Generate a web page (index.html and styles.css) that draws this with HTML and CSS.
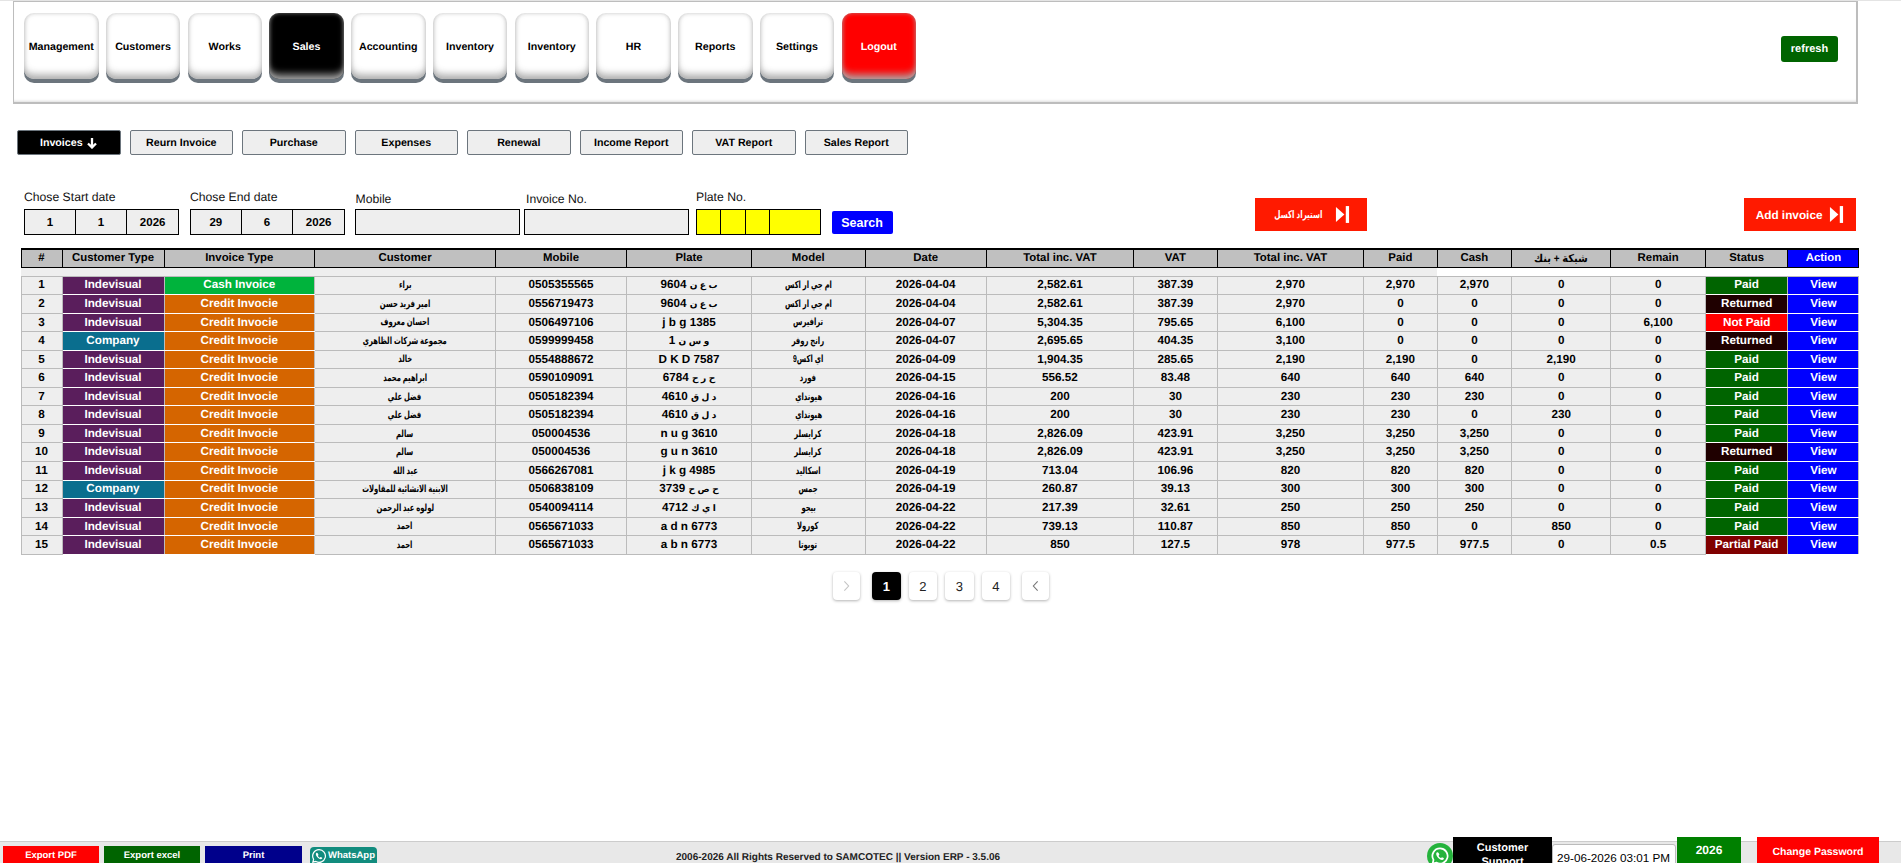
FILE: index.html
```html
<!DOCTYPE html>
<html lang="en">

<head>
    <meta charset="UTF-8">
    <meta name="viewport" content="width=device-width, initial-scale=1.0">
    <title>Invoices</title>
    <link rel="stylesheet" href="styles.css">
</head>

<body>
    <main class="page">

        <header class="topbar">
            <nav class="mainnav">
                <a class="navbtn">Management</a>
                <a class="navbtn">Customers</a>
                <a class="navbtn">Works</a>
                <a class="navbtn navbtn-active">Sales</a>
                <a class="navbtn">Accounting</a>
                <a class="navbtn">Inventory</a>
                <a class="navbtn">Inventory</a>
                <a class="navbtn">HR</a>
                <a class="navbtn">Reports</a>
                <a class="navbtn">Settings</a>
                <a class="navbtn navbtn-logout">Logout</a>
            </nav>
            <a class="refresh">refresh</a>
        </header>

        <div class="subnav">
            <a class="subbtn subbtn-active">Invoices
                <svg class="arrow" viewBox="0 0 12 12" width="12" height="12"><path d="M6 1v9M2 6.500 6 10.500l4-4" fill="none" stroke="#fff" stroke-width="2.300"/></svg>
            </a>
            <a class="subbtn">Reurn Invoice</a>
            <a class="subbtn">Purchase</a>
            <a class="subbtn">Expenses</a>
            <a class="subbtn">Renewal</a>
            <a class="subbtn">Income Report</a>
            <a class="subbtn">VAT Report</a>
            <a class="subbtn">Sales Report</a>
        </div>

        <form class="filters">
            <div class="field field-date">
                <label>Chose Start date</label>
                <div class="cells">
                    <input value="1"><input value="1"><input value="2026">
                </div>
            </div>
            <div class="field field-date field-end">
                <label>Chose End date</label>
                <div class="cells">
                    <input value="29"><input value="6"><input value="2026">
                </div>
            </div>
            <div class="field field-text field-mobile">
                <label>Mobile</label>
                <input>
            </div>
            <div class="field field-text field-invoice">
                <label>Invoice No.</label>
                <input>
            </div>
            <div class="field field-plate">
                <label>Plate No.</label>
                <div class="cells plate-cells">
                    <input><input><input><input>
                </div>
            </div>
            <button type="button" class="search">Search</button>
            <a class="redbtn redbtn-import"><span class="ar ar-import">استيراد اكسل</span>
                <svg class="skip" viewBox="0 0 16 18" width="15" height="17"><path d="M1 1 10 9 1 17z" fill="#fff"/><rect x="11.500" y="0" width="3.500" height="18" fill="#fff"/></svg>
            </a>
            <a class="redbtn redbtn-add">Add invoice
                <svg class="skip" viewBox="0 0 16 18" width="15" height="17"><path d="M1 1 10 9 1 17z" fill="#fff"/><rect x="11.500" y="0" width="3.500" height="18" fill="#fff"/></svg>
            </a>
        </form>

        <table class="invoices">
            <colgroup>
                <col class="c1"><col class="c2"><col class="c3"><col class="c4"><col class="c5"><col class="c6">
                <col class="c7"><col class="c8"><col class="c9"><col class="c10"><col class="c11"><col class="c12">
                <col class="c13"><col class="c14"><col class="c15"><col class="c16"><col class="c17">
            </colgroup>
            <thead>
                <tr>
                    <th>#</th><th>Customer Type</th><th>Invoice Type</th><th>Customer</th><th>Mobile</th><th>Plate</th><th>Model</th><th>Date</th>
                    <th>Total inc. VAT</th><th>VAT</th><th>Total inc. VAT</th><th>Paid</th><th>Cash</th><th><span class="ar ar-head">شبكة + بنك</span></th><th>Remain</th><th>Status</th><th class="th-action">Action</th>
                </tr>
                <tr class="gap">
                    <td colspan="12"></td><td colspan="5" class="gap-white"></td>
                </tr>
            </thead>
            <tbody>
                <tr><td>1</td><td class="tag person">Indevisual</td><td class="tag cash">Cash Invoice</td><td><span class="ar">براء</span></td><td>0505355565</td><td><span class="pl">ب ع ن</span> 9604</td><td><span class="ar">ام جي ار اكس</span></td><td>2026-04-04</td><td>2,582.61</td><td>387.39</td><td>2,970</td><td>2,970</td><td>2,970</td><td>0</td><td>0</td><td class="tag paid">Paid</td><td class="tag view">View</td></tr>
                <tr><td>2</td><td class="tag person">Indevisual</td><td class="tag credit">Credit Invocie</td><td><span class="ar">امير فريد حسن</span></td><td>0556719473</td><td><span class="pl">ب ع ن</span> 9604</td><td><span class="ar">ام جي ار اكس</span></td><td>2026-04-04</td><td>2,582.61</td><td>387.39</td><td>2,970</td><td>0</td><td>0</td><td>0</td><td>0</td><td class="tag returned">Returned</td><td class="tag view">View</td></tr>
                <tr><td>3</td><td class="tag person">Indevisual</td><td class="tag credit">Credit Invocie</td><td><span class="ar">احسان معروف</span></td><td>0506497106</td><td>j b g 1385</td><td><span class="ar">ترافيرس</span></td><td>2026-04-07</td><td>5,304.35</td><td>795.65</td><td>6,100</td><td>0</td><td>0</td><td>0</td><td>6,100</td><td class="tag notpaid">Not Paid</td><td class="tag view">View</td></tr>
                <tr><td>4</td><td class="tag company">Company</td><td class="tag credit">Credit Invocie</td><td><span class="ar">مجموعة شركات الظاهري</span></td><td>0599999458</td><td><span class="pl">و س ن</span> 1</td><td><span class="ar">رانج روفر</span></td><td>2026-04-07</td><td>2,695.65</td><td>404.35</td><td>3,100</td><td>0</td><td>0</td><td>0</td><td>0</td><td class="tag returned">Returned</td><td class="tag view">View</td></tr>
                <tr><td>5</td><td class="tag person">Indevisual</td><td class="tag credit">Credit Invocie</td><td><span class="ar">خالد</span></td><td>0554888672</td><td>D K D 7587</td><td><span class="ar">اي اكس9</span></td><td>2026-04-09</td><td>1,904.35</td><td>285.65</td><td>2,190</td><td>2,190</td><td>0</td><td>2,190</td><td>0</td><td class="tag paid">Paid</td><td class="tag view">View</td></tr>
                <tr><td>6</td><td class="tag person">Indevisual</td><td class="tag credit">Credit Invocie</td><td><span class="ar">ابراهيم محمد</span></td><td>0590109091</td><td><span class="pl">ح ر ح</span> 6784</td><td><span class="ar">فورد</span></td><td>2026-04-15</td><td>556.52</td><td>83.48</td><td>640</td><td>640</td><td>640</td><td>0</td><td>0</td><td class="tag paid">Paid</td><td class="tag view">View</td></tr>
                <tr><td>7</td><td class="tag person">Indevisual</td><td class="tag credit">Credit Invocie</td><td><span class="ar">فضل علي</span></td><td>0505182394</td><td><span class="pl">د ل ق</span> 4610</td><td><span class="ar">هيونداي</span></td><td>2026-04-16</td><td>200</td><td>30</td><td>230</td><td>230</td><td>230</td><td>0</td><td>0</td><td class="tag paid">Paid</td><td class="tag view">View</td></tr>
                <tr><td>8</td><td class="tag person">Indevisual</td><td class="tag credit">Credit Invocie</td><td><span class="ar">فضل علي</span></td><td>0505182394</td><td><span class="pl">د ل ق</span> 4610</td><td><span class="ar">هيونداي</span></td><td>2026-04-16</td><td>200</td><td>30</td><td>230</td><td>230</td><td>0</td><td>230</td><td>0</td><td class="tag paid">Paid</td><td class="tag view">View</td></tr>
                <tr><td>9</td><td class="tag person">Indevisual</td><td class="tag credit">Credit Invocie</td><td><span class="ar">سالم</span></td><td>050004536</td><td>n u g 3610</td><td><span class="ar">كرايسلر</span></td><td>2026-04-18</td><td>2,826.09</td><td>423.91</td><td>3,250</td><td>3,250</td><td>3,250</td><td>0</td><td>0</td><td class="tag paid">Paid</td><td class="tag view">View</td></tr>
                <tr><td>10</td><td class="tag person">Indevisual</td><td class="tag credit">Credit Invocie</td><td><span class="ar">سالم</span></td><td>050004536</td><td>g u n 3610</td><td><span class="ar">كرايسلر</span></td><td>2026-04-18</td><td>2,826.09</td><td>423.91</td><td>3,250</td><td>3,250</td><td>3,250</td><td>0</td><td>0</td><td class="tag returned">Returned</td><td class="tag view">View</td></tr>
                <tr><td>11</td><td class="tag person">Indevisual</td><td class="tag credit">Credit Invocie</td><td><span class="ar">عبد الله</span></td><td>0566267081</td><td>j k g 4985</td><td><span class="ar">اسكاليد</span></td><td>2026-04-19</td><td>713.04</td><td>106.96</td><td>820</td><td>820</td><td>820</td><td>0</td><td>0</td><td class="tag paid">Paid</td><td class="tag view">View</td></tr>
                <tr><td>12</td><td class="tag company">Company</td><td class="tag credit">Credit Invocie</td><td><span class="ar">الابنية الانشائية للمقاولات</span></td><td>0506838109</td><td><span class="pl">ح ص ح</span> 3739</td><td><span class="ar">جمس</span></td><td>2026-04-19</td><td>260.87</td><td>39.13</td><td>300</td><td>300</td><td>300</td><td>0</td><td>0</td><td class="tag paid">Paid</td><td class="tag view">View</td></tr>
                <tr><td>13</td><td class="tag person">Indevisual</td><td class="tag credit">Credit Invocie</td><td><span class="ar">لولوه عبد الرحمن</span></td><td>0540094114</td><td><span class="pl">ا ي ك</span> 4712</td><td><span class="ar">بيجو</span></td><td>2026-04-22</td><td>217.39</td><td>32.61</td><td>250</td><td>250</td><td>250</td><td>0</td><td>0</td><td class="tag paid">Paid</td><td class="tag view">View</td></tr>
                <tr><td>14</td><td class="tag person">Indevisual</td><td class="tag credit">Credit Invocie</td><td><span class="ar">احمد</span></td><td>0565671033</td><td>a d n 6773</td><td><span class="ar">كورولا</span></td><td>2026-04-22</td><td>739.13</td><td>110.87</td><td>850</td><td>850</td><td>0</td><td>850</td><td>0</td><td class="tag paid">Paid</td><td class="tag view">View</td></tr>
                <tr><td>15</td><td class="tag person">Indevisual</td><td class="tag credit">Credit Invocie</td><td><span class="ar">احمد</span></td><td>0565671033</td><td>a b n 6773</td><td><span class="ar">تويوتا</span></td><td>2026-04-22</td><td>850</td><td>127.5</td><td>978</td><td>977.5</td><td>977.5</td><td>0</td><td>0.5</td><td class="tag partial">Partial Paid</td><td class="tag view">View</td></tr>
            </tbody>
        </table>

        <div class="pager">
            <a class="pagebtn pagebtn-arrow pagebtn-off">
                <svg viewBox="0 0 8 14" width="7" height="12"><path d="M1.500 1.500 6.500 7l-5 5.500" fill="none" stroke="#c4c4c4" stroke-width="1.300"/></svg>
            </a>
            <a class="pagebtn pagebtn-active">1</a>
            <a class="pagebtn">2</a>
            <a class="pagebtn">3</a>
            <a class="pagebtn">4</a>
            <a class="pagebtn pagebtn-arrow">
                <svg viewBox="0 0 8 14" width="7" height="12"><path d="M6.500 1.500 1.500 7l5 5.500" fill="none" stroke="#777" stroke-width="1.300"/></svg>
            </a>
        </div>

    </main>

    <footer class="footer">
        <a class="footbtn foot-pdf">Export PDF</a>
        <a class="footbtn foot-excel">Export excel</a>
        <a class="footbtn foot-print">Print</a>
        <a class="foot-whatsapp">
            <svg viewBox="0 0 24 24" width="16" height="16"><path d="M12 2.500a9.500 9.500 0 0 0-8.100 14.400L2.800 21.300l4.500-1.100A9.500 9.500 0 1 0 12 2.500z" fill="none" stroke="#fff" stroke-width="1.800"/><path d="M8.600 7.300c-.5 0-1.300.8-1.300 2.200 0 2.700 3.800 7 7.300 7.300 1.400.1 2.300-.9 2.300-1.700 0-.5-2-1.600-2.400-1.500-.4.100-.8 1-1.200 1-.8 0-3-2.200-3-3 0-.4.800-.8.900-1.200.1-.4-1.100-3.100-2.600-3.100z" fill="#fff"/></svg>
            WhatsApp
        </a>
        <p class="copyright">2006-2026 All Rights Reserved to SAMCOTEC || Version ERP - 3.5.06</p>
        <div class="foot-right">
            <a class="wa-circle">
                <svg viewBox="0 0 24 24" width="26" height="26"><circle cx="12" cy="12" r="12" fill="#25b33c"/><path d="M12 5a7 7 0 0 0-6 10.600L5.200 19l3.400-.9A7 7 0 1 0 12 5z" fill="none" stroke="#fff" stroke-width="1.600"/><path d="M9.500 8.600c-.4 0-1 .6-1 1.600 0 2 2.800 5.200 5.400 5.400 1 .1 1.700-.7 1.700-1.300 0-.4-1.500-1.200-1.800-1.100-.3.100-.6.700-.9.700-.6 0-2.200-1.600-2.200-2.200 0-.3.600-.6.700-.9.100-.3-.8-2.200-1.900-2.200z" fill="#fff"/></svg>
            </a>
            <a class="support">Customer<br>Support</a>
            <input class="clock" value="29-06-2026 03:01 PM">
            <span class="year">2026</span>
            <a class="changepass">Change Password</a>
        </div>
    </footer>
</body>

</html>
```

FILE: styles.css
```css
* {
    box-sizing: border-box;
}

html,
body {
    height: 100%;
}

body {
    margin: 0;
    display: flex;
    flex-direction: column;
    overflow: hidden;
    border-top: 1px solid #e4e4e4;
    background: #fff;
    font-family: "Liberation Sans", "DejaVu Sans", sans-serif;
    color: #000;
    text-rendering: geometricPrecision;
}

.page {
    flex: 1;
    min-height: 0;
}

/* top menu */

.topbar {
    width: 1845px;
    height: 103px;
    margin-left: 13px;
    padding: 11px 18px 0 10px;
    display: flex;
    justify-content: space-between;
    align-items: flex-start;
    border: 1px solid #bdbdbd;
    border-right-width: 2px;
    border-bottom-width: 2px;
    box-shadow: inset 0 -3px 3px -2px #ddd;
}

.mainnav {
    display: flex;
    gap: 7.250px;
}

.navbtn {
    width: 74.500px;
    height: 66px;
    padding-top: 2px;
    display: flex;
    align-items: center;
    justify-content: center;
    border-radius: 10px;
    background: #fff;
    font-size: 10.670px;
    font-weight: 700;
    box-shadow: inset 0 -7px 7px -2px rgba(170, 170, 170, .85), inset 0 0 4px rgba(170, 170, 170, .7), 0 4px 0 #6c757d;
}

.navbtn-active {
    background: #000;
    color: #fff;
}

.navbtn-logout {
    background: #f00;
    color: #fff;
}

.refresh {
    width: 57px;
    height: 26px;
    margin-top: 23px;
    display: flex;
    align-items: center;
    justify-content: center;
    border-radius: 3px;
    background: #006400;
    color: #fff;
    font-size: 11px;
    font-weight: 700;
}

/* sub menu */

.subnav {
    margin: 26px 0 0 17px;
    display: flex;
    gap: 9px;
}

.subbtn {
    width: 103.500px;
    height: 25px;
    padding-top: 1px;
    display: flex;
    align-items: center;
    justify-content: center;
    gap: 3px;
    border: 1px solid #6c757d;
    border-radius: 2px;
    background: #eee;
    font-size: 10.670px;
    font-weight: 700;
}

.subbtn-active {
    background: #000;
    color: #fff;
}

/* search row */

.filters {
    margin: 0 0 0 24px;
    height: 80px;
    display: flex;
    align-items: flex-end;
}

.field label {
    display: block;
    margin-bottom: 5px;
    font-size: 12.200px;
    color: #111;
}

.field input {
    height: 26px;
    border: 1px solid #000;
    background: #eee;
    border-radius: 0;
    padding: 0;
    outline: 0;
    text-align: center;
    font-family: inherit;
    font-size: 11.500px;
    font-weight: 700;
}

.cells {
    display: flex;
}

.field-date {
    width: 155px;
}

.field-date input {
    width: 33.333%;
    border-left-width: 0;
}

.field-date input:first-child {
    border-left-width: 1px;
}

.field-end {
    margin-left: 11px;
}

.field-text {
    width: 165px;
}

.field-text label {
    margin-bottom: 3px;
}

.field-text input {
    width: 100%;
    border-width: 1.500px;
}

.field-mobile {
    margin-left: 9.500px;
}

.field-mobile label {
    margin-left: 1px;
}

.field-invoice {
    margin-left: 4.500px;
}

.field-invoice label {
    margin-left: 2px;
}

.field-plate {
    width: 124.600px;
    margin-left: 7px;
}

.plate-cells input {
    background: #ff0;
    width: 24.500px;
    border-left-width: 0;
}

.plate-cells input:first-child {
    width: 25px;
    border-left-width: 1px;
}

.plate-cells input:last-child {
    flex: 1;
}

.search {
    width: 61px;
    height: 23px;
    margin: 0 0 1px 11px;
    border: 0;
    border-radius: 2px;
    background: #00f;
    color: #fff;
    font-family: inherit;
    font-size: 12.500px;
    font-weight: 700;
}

.redbtn {
    width: 112px;
    height: 33px;
    margin-bottom: 4px;
    display: flex;
    align-items: center;
    justify-content: center;
    gap: 6px;
    background: #ff1a00;
    color: #fff;
    font-size: 11.800px;
    font-weight: 700;
}

.redbtn-import {
    margin-left: 362px;
}

.redbtn-add {
    margin-left: 377px;
}

/* table */

.invoices {
    width: 1838px;
    margin: 13px 0 0 20.500px;
    border-collapse: collapse;
    table-layout: fixed;
    font-size: 11.700px;
    font-weight: 700;
    text-align: center;
}

.c1 { width: 41px; }
.c2 { width: 102px; }
.c3 { width: 150.500px; }
.c4 { width: 181px; }
.c5 { width: 131px; }
.c6 { width: 125px; }
.c7 { width: 113.500px; }
.c8 { width: 121.400px; }
.c9 { width: 147px; }
.c10 { width: 84px; }
.c11 { width: 146px; }
.c12 { width: 74px; }
.c13 { width: 74px; }
.c14 { width: 99.600px; }
.c15 { width: 94.400px; }
.c16 { width: 82.600px; }
.c17 { width: 71px; }

.invoices th {
    height: 18px;
    padding: 0;
    background: #c0c0c0;
    border: 1px solid #000;
    border-top-width: 2px;
    font-size: 11.400px;
    font-weight: 700;
}

.invoices .th-action {
    background: #00f;
    color: #fff;
}

.gap td {
    height: 9px;
    padding: 0;
    background: #eee;
    border: 0;
    border-bottom: 1px solid #bbb;
}

.gap .gap-white {
    background: #fff;
}

.invoices tbody td {
    height: 18.550px;
    padding: 0;
    background: #eee;
    border: 1px solid #bbb;
    white-space: nowrap;
    line-height: 1;
}

/* the only installed arabic face is wide, so squeeze it to the width of the original */
.ar {
    display: inline-block;
    font-size: 10px;
    transform: scaleX(.68);
}

.ar-import {
    margin: 0 -5px 0 -8px;
    font-size: 10.500px;
}

.ar-head {
    font-size: 11px;
    transform: scaleX(.9);
}

.pl {
    font-size: 9px;
}

.invoices tbody .tag {
    color: #fff;
    border-bottom-color: #fff;
    border-left-color: #bbb;
}

.invoices tbody .person { background: #5a1e5c; }
.invoices tbody .company { background: #0a6e8e; }
.invoices tbody .cash { background: #00b33c; }
.invoices tbody .credit { background: #d56500; }
.invoices tbody .paid { background: #006400; }
.invoices tbody .returned { background: #1f0000; }
.invoices tbody .notpaid { background: #f00; }
.invoices tbody .partial { background: #800000; }
.invoices tbody .view { background: #00f; }

/* pager */

.pager {
    margin: 17.500px 0 0 833px;
    display: flex;
    gap: 8px;
}

.pagebtn {
    width: 28.500px;
    height: 28px;
    display: flex;
    align-items: center;
    justify-content: center;
    border-radius: 4px;
    background: #fff;
    color: #222;
    font-size: 13px;
    box-shadow: 0 1px 3px rgba(0, 0, 0, .3);
}

.pagebtn-arrow {
    width: 27px;
}

.pagebtn-off {
    margin-right: 4px;
}

.pagebtn-arrow:last-child {
    margin-left: 4px;
}

.pagebtn-active {
    background: #000;
    color: #fff;
    font-weight: 700;
}

/* footer */

.footer {
    height: 22px;
    flex: none;
    padding-left: 3px;
    display: flex;
    align-items: flex-start;
    border-top: 1px solid #ccc;
    background: #e8e8e8;
}

.footbtn {
    width: 96px;
    height: 17px;
    margin: 4px 5px 0 0;
    display: flex;
    align-items: flex-start;
    justify-content: center;
    padding-top: 4px;
    color: #fff;
    font-size: 9.500px;
    font-weight: 700;
}

.foot-pdf { background: #f00; }
.foot-excel { background: #006400; }
.foot-print { background: #00008b; width: 97px; margin-right: 8px; }

.foot-whatsapp {
    width: 67px;
    height: 17px;
    margin-top: 5px;
    display: flex;
    align-items: center;
    gap: 1px;
    padding-left: 1px;
    border-radius: 4px 4px 0 0;
    background: #128c7e;
    color: #fff;
    font-size: 9.500px;
    font-weight: 700;
}

.copyright {
    margin: 10px 0 0 299px;
    font-size: 10px;
    font-weight: 700;
    color: #222;
}

.foot-right {
    margin-left: auto;
    padding-right: 22px;
    display: flex;
    align-items: flex-start;
    height: 22px;
}

.wa-circle {
    margin-top: 1px;
    height: 26px;
}

.support {
    width: 99px;
    height: 30px;
    margin-top: -5px;
    padding-top: 4px;
    background: #000;
    color: #fff;
    text-align: center;
    font-size: 11px;
    line-height: 14px;
    font-weight: 700;
}

.clock {
    width: 124px;
    height: 24px;
    margin-top: 2px;
    padding: 2px 0 0 4px;
    border: 1px solid #bbb;
    border-radius: 3px 3px 0 0;
    background: #fff;
    font-family: inherit;
    font-size: 11.700px;
}

.year {
    width: 64px;
    height: 27px;
    margin: -5px 0 0 1px;
    padding-top: 6px;
    background: #008000;
    color: #fff;
    text-align: center;
    font-size: 12px;
    font-weight: 700;
}

.changepass {
    width: 122px;
    height: 27px;
    margin: -5px 0 0 16px;
    padding-top: 9px;
    background: #f00;
    color: #fff;
    text-align: center;
    font-size: 10.500px;
    font-weight: 700;
}
```
